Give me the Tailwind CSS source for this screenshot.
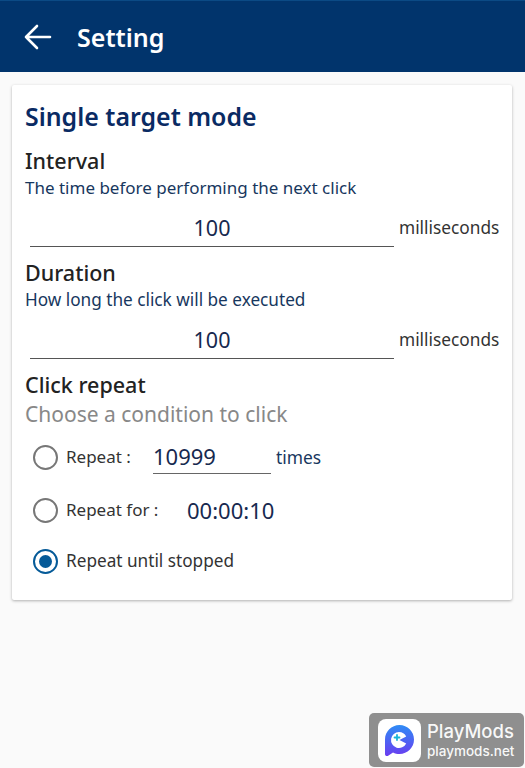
<!DOCTYPE html>
<html><head><meta charset="utf-8">
<script src="https://cdn.jsdelivr.net/npm/@tailwindcss/browser@4"></script>
</head>
<body class="relative w-[525px] h-[768px] overflow-hidden bg-[#fafafa] font-['Noto_Sans',sans-serif]">
<header class="h-[72px] bg-[#01346c] border-t border-[#0b4a85] flex items-center pl-[24px]">
  <svg width="28" height="26" viewBox="0 0 28 26" fill="none" stroke="#fff" stroke-width="2.6" stroke-linecap="round" stroke-linejoin="round"><path d="M26 13H2M13 2 2 13l11 11"/></svg>
  <h1 class="ml-[25px] text-white text-[25px] leading-[32px] font-semibold">Setting</h1>
</header>
<main class="ml-[12px] w-[500px] mt-[13px] h-[515px] bg-white rounded-[2px] shadow-[0_1px_3px_rgba(0,0,0,0.3)] pl-[13px] pr-[12px] pt-[13px]">
  <h2 class="text-[#0a2a63] text-[24.9px] leading-[36px] font-semibold">Single target mode</h2>
  <h3 class="mt-[13px] text-[#222] text-[21.5px] leading-[28px] font-medium">Interval</h3>
  <p class="mt-[1px] text-[#17375e] text-[17px] leading-[24px]">The time before performing the next click</p>
  <div class="mt-[12px] flex items-end">
    <div class="ml-[5px] w-[364px] h-[35px] border-b border-[#555] text-center text-[#17294f] text-[21.5px] leading-[32px]">100</div>
    <span class="ml-[5px] text-[#333] text-[17.3px] leading-[24px] mb-[7px]">milliseconds</span>
  </div>
  <h3 class="mt-[12px] text-[#222] text-[21.5px] leading-[28px] font-medium">Duration</h3>
  <p class="mt-[1px] text-[#17375e] text-[17.2px] leading-[24px]">How long the click will be executed</p>
  <div class="mt-[12px] flex items-end">
    <div class="ml-[5px] w-[364px] h-[35px] border-b border-[#555] text-center text-[#17294f] text-[21.5px] leading-[32px]">100</div>
    <span class="ml-[5px] text-[#333] text-[17.3px] leading-[24px] mb-[7px]">milliseconds</span>
  </div>
  <h3 class="mt-[12px] text-[#222] text-[21.5px] leading-[28px] font-medium">Click repeat</h3>
  <p class="text-[#888] text-[21px] leading-[30px]">Choose a condition to click</p>
  <div class="mt-[2px] ml-[8px] flex flex-col">
    <div class="h-[52px] flex items-center">
      <span class="w-[25px] h-[25px] rounded-full border-[2.5px] border-[#777]"></span>
      <span class="ml-[8px] w-[87px] text-[#333] text-[17px]">Repeat :</span>
      <span class="w-[118px] h-[34px] border-b border-[#666] text-[#17294f] text-[22px] leading-[32px]">10999</span>
      <span class="ml-[5px] text-[#17375e] text-[17.4px]">times</span>
    </div>
    <div class="h-[54px] flex items-center">
      <span class="w-[25px] h-[25px] rounded-full border-[2.5px] border-[#777]"></span>
      <span class="ml-[8px] w-[121px] text-[#333] text-[17px]">Repeat for :</span>
      <span class="text-[#17294f] text-[22px]">00:00:10</span>
    </div>
    <div class="h-[48px] flex items-center">
      <span class="w-[25px] h-[25px] rounded-full border-[2.5px] border-[#055a98] flex items-center justify-center"><span class="w-[13px] h-[13px] rounded-full bg-[#055a98]"></span></span>
      <span class="ml-[8px] text-[#333] text-[17.2px]">Repeat until stopped</span>
    </div>
  </div>
</main>
<div class="absolute left-[369px] top-[713px] w-[155px] h-[54px] rounded-[5px] bg-[#8f8f8f] flex items-center pl-[9px]">
  <div class="w-[43px] h-[43px] rounded-[8px] bg-white flex items-center justify-center">
    <svg width="31" height="33" viewBox="0 0 31 33"><defs><linearGradient id="g" x1="0" y1="0" x2="0" y2="1"><stop offset="0" stop-color="#2f8cf5"/><stop offset="1" stop-color="#6a3cf0"/></linearGradient></defs><path d="M15.500 1C7.500 1 1 7.500 1 15.500V30c0 2 2 2.600 3.500 1.500L9 28.500c2 1 4.200 1.500 6.500 1.500 8 0 14.500-6.500 14.500-14.500S23.500 1 15.500 1Z" fill="url(#g)"/><path d="M15 8a8 8 0 1 0 7.200 11.500L15.500 16l6.700-3.500A8 8 0 0 0 15 8Z" fill="#fff"/><path d="M13 11v5M10.500 13.500h5" stroke="#19b5d8" stroke-width="1.800" stroke-linecap="round"/></svg>
  </div>
  <div class="ml-[6px] flex flex-col text-white/95 font-['Inter',sans-serif]">
    <span class="text-[18.5px] leading-[22px] font-medium">PlayMods</span>
    <span class="text-[13.5px] leading-[18px] font-medium">playmods.net</span>
  </div>
</div>
</body></html>
